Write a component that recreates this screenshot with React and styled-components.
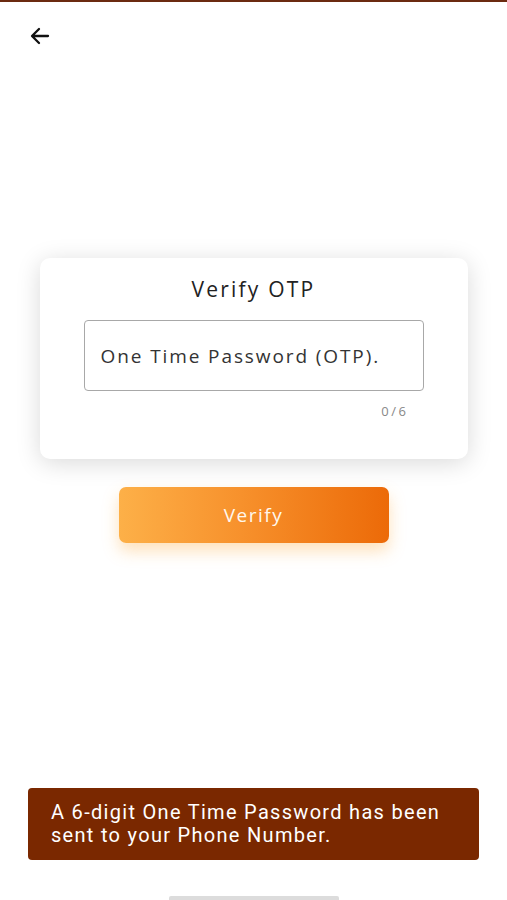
import React, { useState } from "react";
import styled, { createGlobalStyle } from "styled-components";

const GlobalStyle = createGlobalStyle`
  html, body {
    margin: 0;
    padding: 0;
    background: #ffffff;
  }
  * {
    box-sizing: border-box;
  }
`;

function App() {
  const [otp, setOtp] = useState("");

  return (
    <Screen>
      <GlobalStyle />
      <TopBar />
      <Header>
        <BackButton aria-label="back">
          <svg width="24" height="24" viewBox="0 0 24 24" fill="none">
            <path
              d="M20 12H4.5M11 5l-7 7 7 7"
              stroke="#111"
              strokeWidth="2.3"
              strokeLinecap="round"
              strokeLinejoin="round"
            />
          </svg>
        </BackButton>
      </Header>

      <Card>
        <Title>Verify OTP</Title>
        <OtpInput
          value={otp}
          maxLength={6}
          placeholder="One Time Password (OTP)."
          onChange={e => setOtp(e.target.value)}
        />
        <Counter>{otp.length}/6</Counter>
      </Card>

      <VerifyButton>Verify</VerifyButton>

      <Toast>
        A 6-digit One Time Password has been sent to your Phone Number.
      </Toast>
      <HomeIndicator />
    </Screen>
  );
}

const Screen = styled.div`
  height: 900px;
  display: flex;
  flex-direction: column;
  align-items: center;
  background: #fff;
  font-family: "Open Sans", "Liberation Sans", sans-serif;
`;

const TopBar = styled.div`
  align-self: stretch;
  height: 2px;
  background: #6b2a10;
`;

const Header = styled.div`
  align-self: stretch;
  height: 64px;
  padding: 22px 0 0 28px;
`;

const BackButton = styled.button`
  border: none;
  background: none;
  padding: 0;
  display: flex;
  cursor: pointer;
`;

const Card = styled.div`
  margin-top: 192px;
  width: 428px;
  height: 201px;
  background: #fff;
  border-radius: 10px;
  box-shadow: 0 4px 24px rgba(0, 0, 0, 0.15);
  display: flex;
  flex-direction: column;
  align-items: center;
  padding-top: 17px;
`;

const Title = styled.h2`
  margin: 0;
  font-size: 21px;
  font-weight: 500;
  color: #222;
  letter-spacing: 2.2px;
  line-height: 29px;
`;

const OtpInput = styled.input`
  margin-top: 16px;
  width: 340px;
  height: 71px;
  border: 1px solid #a8a8a8;
  border-radius: 4px;
  padding: 0 16px;
  font-family: inherit;
  font-size: 19px;
  color: #222;
  letter-spacing: 1.9px;
  outline: none;

  &::placeholder {
    color: #333;
  }
`;

const Counter = styled.span`
  align-self: flex-end;
  margin: 11px 59px 0 0;
  font-size: 13px;
  color: #888;
  letter-spacing: 2.5px;
`;

const VerifyButton = styled.button`
  margin-top: 28px;
  width: 270px;
  height: 56px;
  border: none;
  border-radius: 7px;
  background: linear-gradient(90deg, #fdb048 0%, #f7912c 45%, #ec6a08 100%);
  box-shadow: 0 8px 16px rgba(252, 170, 60, 0.35);
  color: #fff8ee;
  font-family: inherit;
  font-size: 19px;
  letter-spacing: 1.5px;
  cursor: pointer;
`;

const Toast = styled.div`
  margin-top: auto;
  width: 451px;
  min-height: 72px;
  background: #7a2800;
  border-radius: 4px;
  padding: 13px 20px 12px 23px;
  color: #fff;
  font-family: Roboto, "Liberation Sans", sans-serif;
  font-size: 20px;
  letter-spacing: 1.3px;
  line-height: 23px;
`;

const HomeIndicator = styled.div`
  margin-top: 36px;
  width: 170px;
  height: 4px;
  border-radius: 2px 2px 0 0;
  background: #dcdcdc;
`;

export default App;
